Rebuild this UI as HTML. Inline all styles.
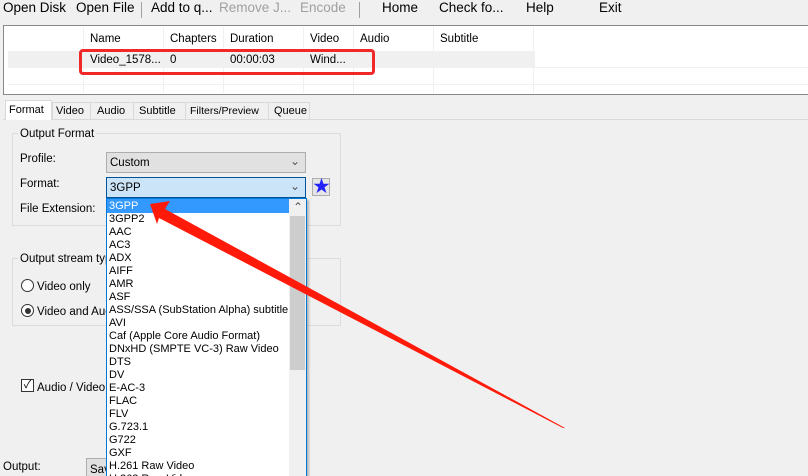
<!DOCTYPE html><html style="overflow:hidden;height:476px"><head><style>
*{margin:0;padding:0;box-sizing:border-box}
html,body{width:808px;height:476px;overflow:hidden}
body{background:#f0f0f0;font-family:"Liberation Sans","Noto Sans CJK SC",sans-serif;font-size:11.5px;color:#000;position:relative}
.a{position:absolute;white-space:nowrap}
.m{font-size:13.5px;top:0}
.g{color:#a0a0a0}
.grp{position:absolute;border:1px solid #dcdcdc}
</style></head><body>
<div class="a m" style="left:3px">Open Disk</div>
<div class="a m" style="left:76px">Open File</div>
<div class="a" style="left:141px;top:2px;width:1px;height:16px;background:#a0a0a0"></div>
<div class="a m" style="left:151px">Add to q...</div>
<div class="a m g" style="left:219px">Remove J...</div>
<div class="a m g" style="left:300px">Encode</div>
<div class="a" style="left:359px;top:2px;width:1px;height:16px;background:#a0a0a0"></div>
<div class="a m" style="left:382px">Home</div>
<div class="a m" style="left:439px">Check fo...</div>
<div class="a m" style="left:526px">Help</div>
<div class="a m" style="left:599px">Exit</div>

<div class="a" style="left:3px;top:25px;width:805px;height:70px;background:#fff;border-top:1px solid #888;border-left:1px solid #888;border-bottom:1px solid #888"></div>
<div class="a" style="left:8px;top:51px;width:527px;height:16px;background:#f0f0f0"></div>
<div class="a" style="left:8px;top:67px;width:800px;height:1px;background:#f0f0f0"></div>
<div class="a" style="left:8px;top:84px;width:800px;height:1px;background:#f0f0f0"></div>
<div class="a" style="left:83px;top:27px;width:1px;height:66px;background:#f0f0f0"></div>
<div class="a" style="left:163px;top:27px;width:1px;height:66px;background:#f0f0f0"></div>
<div class="a" style="left:223px;top:27px;width:1px;height:66px;background:#f0f0f0"></div>
<div class="a" style="left:303px;top:27px;width:1px;height:66px;background:#f0f0f0"></div>
<div class="a" style="left:353px;top:27px;width:1px;height:66px;background:#f0f0f0"></div>
<div class="a" style="left:433px;top:27px;width:1px;height:66px;background:#f0f0f0"></div>
<div class="a" style="left:533px;top:27px;width:1px;height:66px;background:#f0f0f0"></div>
<div class="a" style="left:90px;top:33px">Name</div>
<div class="a" style="left:170px;top:33px">Chapters</div>
<div class="a" style="left:230px;top:33px">Duration</div>
<div class="a" style="left:310px;top:33px">Video</div>
<div class="a" style="left:360px;top:33px">Audio</div>
<div class="a" style="left:440px;top:33px">Subtitle</div>
<div class="a" style="left:90px;top:54px">Video_1578...</div>
<div class="a" style="left:170px;top:54px">0</div>
<div class="a" style="left:230px;top:54px">00:00:03</div>
<div class="a" style="left:310px;top:54px">Wind...</div>
<div class="a" style="left:79px;top:49px;width:296px;height:26px;border:3px solid #f02828;border-radius:4px"></div>

<div class="a" style="left:3px;top:119px;width:805px;height:1px;background:#d9d9d9"></div>
<div class="a" style="left:5px;top:100px;width:47px;height:20px;background:#fff;border:1px solid #d9d9d9;border-bottom:none"></div>
<div class="a" style="left:9px;top:104px;font-size:11px">Format</div>
<div class="a" style="left:52px;top:102px;width:258px;height:17px;border:1px solid #d9d9d9;border-bottom:none"></div>
<div class="a" style="left:90px;top:102px;width:1px;height:17px;background:#d9d9d9"></div>
<div class="a" style="left:133px;top:102px;width:1px;height:17px;background:#d9d9d9"></div>
<div class="a" style="left:185px;top:102px;width:1px;height:17px;background:#d9d9d9"></div>
<div class="a" style="left:268px;top:102px;width:1px;height:17px;background:#d9d9d9"></div>
<div class="a" style="left:56px;top:105px;font-size:11px">Video</div>
<div class="a" style="left:97px;top:105px;font-size:11px">Audio</div>
<div class="a" style="left:139px;top:105px;font-size:11px">Subtitle</div>
<div class="a" style="left:190px;top:105px;font-size:10.5px">Filters/Preview</div>
<div class="a" style="left:274px;top:105px;font-size:11px">Queue</div>

<div class="grp" style="left:12px;top:133px;width:329px;height:93px"></div>
<div class="a" style="left:18px;top:128px;background:#f0f0f0;padding:0 2px">Output Format</div>
<div class="a" style="left:20px;top:153px">Profile:</div>
<div class="a" style="left:106px;top:152px;width:200px;height:21px;background:#e1e1e1;border:1px solid #adadad;padding:4px 3px">Custom</div>
<div class="a" style="left:290px;top:154px;font-size:12px;color:#555">&#8964;</div>
<div class="a" style="left:20px;top:178px">Format:</div>
<div class="a" style="left:106px;top:177px;width:200px;height:21px;background:#cce4f7;border:1px solid #005499;padding:4px 3px">3GPP</div>
<div class="a" style="left:290px;top:179px;font-size:12px;color:#555">&#8964;</div>
<div class="a" style="left:312px;top:178px;width:18px;height:18px;border:1px solid #adadad;background:#e5e5e5;color:#2222ff;font-size:17px;line-height:16px;text-align:center">★</div>
<div class="a" style="left:20px;top:203px">File Extension:</div>

<div class="grp" style="left:12px;top:258px;width:329px;height:68px"></div>
<div class="a" style="left:18px;top:253px;background:#f0f0f0;padding:0 2px">Output stream typ</div>
<div class="a" style="left:21px;top:279px;width:13px;height:13px;border:1px solid #333;border-radius:50%;background:#fff"></div>
<div class="a" style="left:37px;top:281px">Video only</div>
<div class="a" style="left:21px;top:304px;width:13px;height:13px;border:1px solid #333;border-radius:50%;background:#fff"></div>
<div class="a" style="left:24.5px;top:307.5px;width:6px;height:6px;border-radius:50%;background:#333"></div>
<div class="a" style="left:37px;top:306px">Video and Aud</div>
<div class="a" style="left:21px;top:379px;width:13px;height:13px;border:1px solid #333;background:#fff;font-size:11px;line-height:11px;text-align:center">✓</div>
<div class="a" style="left:37px;top:382px">Audio / Video s</div>
<div class="a" style="left:3px;top:461px">Output:</div>
<div class="a" style="left:86px;top:458px;width:30px;height:20px;background:#e1e1e1;border:1px solid #adadad;padding:5px 3px">Sav</div>

<div class="a" style="left:106px;top:198px;width:201px;height:280px;background:#fff;border:1px solid #0078d7;box-shadow:2px 2px 2px rgba(0,0,0,.25);overflow:hidden">
<div style="position:absolute;left:0;top:0;width:182px;height:14px;background:#3399ff"></div>
<div style="position:absolute;left:182px;top:0;width:17px;height:280px;background:#f0f0f0"></div>
<div style="position:absolute;left:183px;top:17px;width:15px;height:154px;background:#cdcdcd"></div>
<div style="position:absolute;left:186px;top:1px;font-size:12px;color:#555">&#8963;</div>
<div style="position:absolute;left:2px;top:1px;font-size:11px;line-height:13px">
<div style="color:#fff">3GPP</div><div>3GPP2</div><div>AAC</div><div>AC3</div><div>ADX</div><div>AIFF</div><div>AMR</div><div>ASF</div><div>ASS/SSA (SubStation Alpha) subtitle</div><div>AVI</div><div>Caf (Apple Core Audio Format)</div><div>DNxHD (SMPTE VC-3) Raw Video</div><div>DTS</div><div>DV</div><div>E-AC-3</div><div>FLAC</div><div>FLV</div><div>G.723.1</div><div>G722</div><div>GXF</div><div>H.261 Raw Video</div><div>H.263 Raw Video</div>
</div></div>

<svg class="a" style="left:0;top:0" width="808" height="476"><polygon fill="#ff1a0a" points="150,204 170,201 165,209 565,428 563,428 159,218 157,224"/></svg>
</body></html>
